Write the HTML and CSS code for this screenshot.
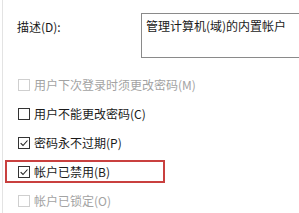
FILE: index.html
```html
<!DOCTYPE html>
<html lang="zh-CN">
<head>
    <meta charset="UTF-8">
    <title>帐户属性</title>
    <link rel="stylesheet" href="styles.css">
</head>
<body>
    <div class="panel">
        <div class="desc-row">
            <label class="desc-label" for="desc">描述(D):</label>
            <div class="desc-box" id="desc">管理计算机(域)的内置帐户</div>
        </div>

        <ul class="options">
            <li class="option disabled">
                <span class="box"></span>
                <span>用户下次登录时须更改密码(M)</span>
            </li>
            <li class="option">
                <span class="box"></span>
                <span>用户不能更改密码(C)</span>
            </li>
            <li class="option">
                <span class="box checked">
                    <svg viewBox="0 0 12 12"><path d="M2 6.2 L4.8 9 L10.2 3"/></svg>
                </span>
                <span>密码永不过期(P)</span>
            </li>
            <li class="option marked">
                <span class="box checked">
                    <svg viewBox="0 0 12 12"><path d="M2 6.2 L4.8 9 L10.2 3"/></svg>
                </span>
                <span>帐户已禁用(B)</span>
                <span class="highlight"></span>
            </li>
            <li class="option disabled">
                <span class="box"></span>
                <span>帐户已锁定(O)</span>
            </li>
        </ul>
    </div>
</body>
</html>
```

FILE: styles.css
```css
* {
    margin: 0;
    padding: 0;
    box-sizing: border-box;
}

body {
    background: #fff;
    font-family: "Noto Sans CJK SC", "Liberation Sans", sans-serif;
    font-size: 12px;
    color: #1a1a1a;
    overflow: hidden;
}

.panel {
    width: 299px;
    height: 213px;
    margin-left: 2px;
    border-left: 1px solid #e3e3e3;
    overflow: hidden;
}

.desc-row {
    display: flex;
    padding-top: 13px;
}

.desc-label {
    flex: none;
    width: 138px;
    padding-left: 14px;
    padding-top: 6px;
    line-height: 16px;
}

.desc-box {
    flex: none;
    width: 220px;
    height: 45px;
    border: 1px solid #8a8a8a;
    border-right: none;
    padding: 4px 0 0 4px;
    line-height: 16px;
    white-space: nowrap;
}

.options {
    list-style: none;
    padding-top: 12px;
}

.option {
    position: relative;
    display: flex;
    align-items: center;
    height: 29px;
    padding-left: 15px;
}

.box {
    flex: none;
    width: 12px;
    height: 12px;
    border: 1px solid #333;
    margin-right: 4px;
    display: flex;
    align-items: center;
    justify-content: center;
}

.box svg {
    width: 10px;
    height: 10px;
    fill: none;
    stroke: #222;
    stroke-width: 1.3;
}

.disabled {
    color: #a3a3a3;
}

.disabled .box {
    border-color: #cfcfcf;
}

.highlight {
    position: absolute;
    left: 2px;
    top: 3px;
    width: 160px;
    height: 23px;
    border: 2px solid #c9403f;
}
```
